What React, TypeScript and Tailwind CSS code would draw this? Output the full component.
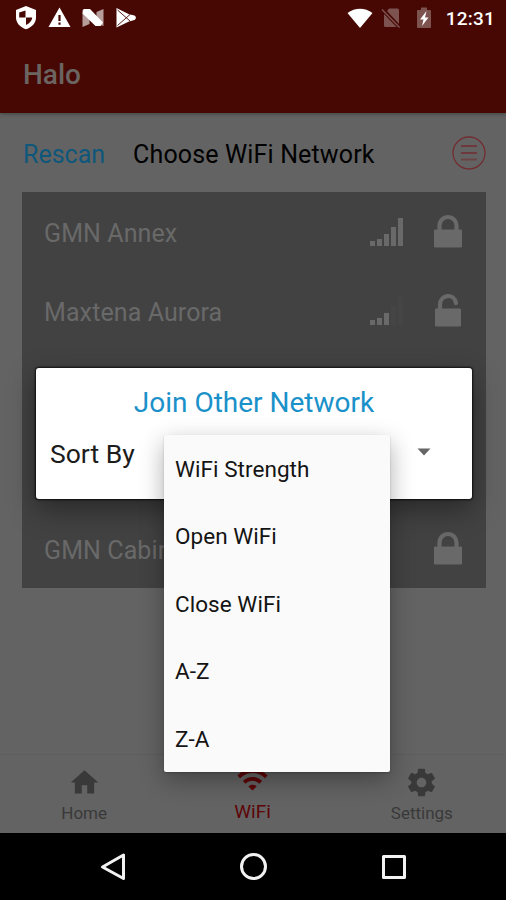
import React from 'react';

const networks = [
  { name: 'GMN Annex', level: 5, locked: true },
  { name: 'Maxtena Aurora', level: 3, locked: false },
  { name: '', level: 0, locked: true },
  { name: '', level: 0, locked: true },
  { name: 'GMN Cabinet', level: 0, locked: true },
];

const sortOptions = ['WiFi Strength', 'Open WiFi', 'Close WiFi', 'A-Z', 'Z-A'];

const StatusBar: React.FC = () => (
  <div className="flex h-9 items-center justify-between pl-[15px] pr-[11px]">
    <div className="flex items-center gap-[11px]">
      <svg width="22" height="24" viewBox="0 0 22 24">
        <path d="M11 0 21 4v7.500c0 5.400-4 9.800-10 11.800C5 21.300 1 16.900 1 11.500V4z" fill="#fff" />
        <path d="M10.500 4.500v7H4.200v-5zM11 11.500h6.300c-.5 3.500-3 6-6.300 7.500z" fill="#470804" />
      </svg>
      <svg width="23" height="24" viewBox="0 0 23 24">
        <path d="M11.500 1.500 22.500 21H.5z" fill="#fff" />
        <path d="M10.400 9h2.200v6h-2.200zM10.400 16.500h2.200v2.200h-2.200z" fill="#470804" />
      </svg>
      <svg width="22" height="24" viewBox="0 0 22 24">
        <path d="M.5 4v17l7-3V4zM14.500 6v12l7 2V3z" fill="#b69c9a" />
        <path d="M1.500 3h6.500l13 13.500-2.500 3.500h-5L.5 7.500z" fill="#fff" />
      </svg>
      <svg width="22" height="24" viewBox="0 0 22 24">
        <path d="M1.500 2 14 8.300l5.500 1.200a2.500 2.500 0 0 1 0 4.500L14 15.500 1.500 21.500z" fill="#fff" />
        <path d="m2.500 4 12.500 11M2.500 19.500 15 8.500" stroke="#470804" strokeWidth=".9" />
      </svg>
    </div>
    <div className="flex items-center">
      <svg width="26" height="22" viewBox="0 0 26 22">
        <path d="M.5 6C8 .2 18 .2 25.500 6L13 21z" fill="#fff" />
      </svg>
      <svg className="ml-[7px]" width="22" height="24" viewBox="0 0 22 24">
        <path d="M9 2.500h8.500q1.500 0 1.500 1.500v14L7 5zM4 8l12.500 13H5.500Q4 21 4 19.500z" fill="#7d5350" />
        <path d="m2 3.500 17.500 18" stroke="#7d5350" strokeWidth="1.500" />
      </svg>
      <svg className="ml-[14px]" width="16" height="24" viewBox="0 0 16 24">
        <path d="M5 1.500h6V4h3q1 0 1 1v16q0 1-1 1H2q-1 0-1-1V5q0-1 1-1h3z" fill="#7d5350" />
        <path d="M10.500 5 4 13.500h3.500L6 20l6.500-8.500H9z" fill="#fff" />
      </svg>
      <span className="ml-[14px] text-[19px] font-medium leading-none tracking-[0.2px] text-white">12:31</span>
    </div>
  </div>
);

const SignalIcon: React.FC<{ level: number }> = ({ level }) => (
  <svg width="34" height="30" viewBox="0 0 34 30">
    {[5, 7, 12, 19, 28].map((h, i) => (
      <rect key={h} x={i * 7} y={29 - h} width="5" height={h} fill={i < level ? '#696969' : '#454545'} />
    ))}
  </svg>
);

const LockIcon: React.FC<{ locked: boolean }> = ({ locked }) => (
  <svg className="mb-0.5" width="28" height="34" viewBox="0 0 28 34">
    <path
      d={locked ? 'M5.500 17v-5.500a8.500 8.500 0 0 1 17 0V17' : 'M6 17v-5.500c0-10 14-12 16-1.500'}
      fill="none"
      stroke="#696969"
      strokeWidth="4.200"
      strokeLinecap={locked ? 'butt' : 'round'}
    />
    <rect x={locked ? 0 : 1} y="15.500" width={locked ? 28 : 26} height="18" rx="1" fill="#696969" />
  </svg>
);

const NetworkList: React.FC = () => (
  <ul className="ml-[22px] mr-5 h-[396px] bg-[#424242] pr-6 pl-[22px] text-[25px] text-[#696969]">
    {networks.map((network, i) => (
      <li key={i} className="flex h-[79.300px] items-center">
        <span className="flex-1 pt-1 tracking-[0.1px]">{network.name}</span>
        {network.level > 0 && <SignalIcon level={network.level} />}
        <span className="ml-[30px]">
          <LockIcon locked={network.locked} />
        </span>
      </li>
    ))}
  </ul>
);

const TabBar: React.FC = () => (
  <div className="flex h-[79px] border-t border-[#5e5e5e] text-[17px] text-[#393939]">
    <div className="flex flex-1 flex-col items-center pt-[11px]">
      <svg width="33" height="33" viewBox="0 0 24 24" fill="currentColor">
        <path d="M10 20v-6h4v6h5v-8h3L12 3 2 12h3v8z" />
      </svg>
      <span className="leading-[29px]">Home</span>
    </div>
    <div className="flex flex-1 flex-col items-center pt-[8px] text-[#5d0508]">
      <svg width="33" height="33" viewBox="0 0 24 24" fill="currentColor">
        <path d="M1 9l2 2c4.970-4.970 13.030-4.970 18 0l2-2C16.930 2.930 7.080 2.930 1 9zm8 8l3 3 3-3c-1.650-1.660-4.340-1.660-6 0zm-4-4l2 2c2.760-2.760 7.240-2.760 10 0l2-2C15.140 9.140 8.870 9.140 5 13z" />
      </svg>
      <span className="text-[19px] leading-[32px]">WiFi</span>
    </div>
    <div className="flex flex-1 flex-col items-center pl-px pt-[11px]">
      <svg width="33" height="33" viewBox="0 0 24 24" fill="currentColor">
        <path d="M19.430 12.980c.04-.32.07-.64.07-.98s-.03-.66-.07-.98l2.110-1.650c.19-.15.24-.42.12-.64l-2-3.460c-.12-.22-.39-.3-.61-.22l-2.490 1c-.52-.4-1.080-.73-1.690-.98l-.38-2.650C14.460 2.180 14.250 2 14 2h-4c-.25 0-.46.18-.49.42l-.38 2.650c-.61.25-1.170.59-1.690.98l-2.490-1c-.23-.09-.49 0-.61.22l-2 3.460c-.13.22-.07.49.12.64l2.110 1.650c-.04.32-.07.65-.07.98s.03.66.07.98l-2.110 1.650c-.19.15-.24.42-.12.64l2 3.460c.12.22.39.3.61.22l2.490-1c.52.4 1.080.73 1.690.98l.38 2.650c.03.24.24.42.49.42h4c.25 0 .46-.18.49-.42l.38-2.650c.61-.25 1.170-.59 1.690-.98l2.490 1c.23.09.49 0 .61-.22l2-3.460c.12-.22.07-.49-.12-.64l-2.110-1.650zM12 15.500c-1.930 0-3.500-1.570-3.500-3.500s1.570-3.500 3.500-3.500 3.500 1.570 3.500 3.500-1.570 3.500-3.500 3.500z" />
      </svg>
      <span className="leading-[29px]">Settings</span>
    </div>
  </div>
);

const SystemNav: React.FC = () => (
  <div className="flex h-[67px] items-center justify-center gap-[112px] bg-black pl-px">
    <svg width="28" height="30" viewBox="0 0 28 30" fill="none" stroke="#f2f2f2" strokeWidth="3" strokeLinejoin="round">
      <path d="M23.500 3v23.500L2.500 15z" />
    </svg>
    <svg width="28" height="28" viewBox="0 0 28 28" fill="none" stroke="#f2f2f2" strokeWidth="3">
      <circle cx="13.500" cy="13.500" r="12" />
    </svg>
    <svg width="28" height="28" viewBox="0 0 28 28" fill="none" stroke="#f2f2f2" strokeWidth="3" strokeLinejoin="round">
      <rect x="3.500" y="3.500" width="21" height="21" />
    </svg>
  </div>
);

const JoinDialog: React.FC = () => (
  <div className="absolute left-[36px] top-[368px] h-[131px] w-[436px] rounded-[3px] bg-white shadow-[0_0_2px_1px_rgba(0,0,0,0.75),0_10px_28px_rgba(0,0,0,0.4)]">
    <h2 className="pt-[17px] text-center text-[28px] leading-[36px] text-[#1a91c9]">Join Other Network</h2>
    <div className="flex items-center justify-between pl-[14px] pr-[41px] pt-[15px]">
      <span className="text-[26.500px] leading-[36px] text-[#1c1c1c]">Sort By</span>
      <svg className="-mt-1" width="14" height="8" viewBox="0 0 14 8">
        <path d="M.5.5h13L7 7.500z" fill="#666" />
      </svg>
    </div>
  </div>
);

const SortMenu: React.FC = () => (
  <ul className="absolute left-[164px] top-[435px] h-[337px] w-[226px] rounded-[2px] bg-[#fafafa] text-[22.500px] text-[#141414] shadow-[0_1px_2px_rgba(0,0,0,0.2),0_8px_24px_rgba(0,0,0,0.32)]">
    {sortOptions.map((option) => (
      <li key={option} className="flex h-[67.500px] items-center pl-[11px] pt-0.5 tracking-[0.05px]">
        {option}
      </li>
    ))}
  </ul>
);

const App: React.FC = () => {
  return (
    <div className="relative flex h-[900px] w-[506px] flex-col overflow-hidden bg-[#636363] font-['Roboto',sans-serif]">
      <header className="h-[113px] bg-[#470804] shadow-[0_1px_4px_rgba(0,0,0,0.35)]">
        <StatusBar />
        <h1 className="pl-[23px] pt-[20px] text-[28px] font-medium leading-[38px] text-[#6b6562]">Halo</h1>
      </header>

      <div className="flex h-[79px] items-center pl-[23px] pr-5 text-[25px]">
        <span className="pt-1 text-[#0e577b]">Rescan</span>
        <span className="ml-7 flex-1 pt-1 tracking-[0.15px] text-black">Choose WiFi Network</span>
        <svg width="34" height="34" viewBox="0 0 34 34" fill="none" stroke="#722d32">
          <circle cx="17" cy="17" r="16" strokeWidth="1.300" />
          <path d="M9 10h16M9 17h16" strokeWidth="1.500" />
          <path d="M9 23.500h16" strokeWidth="2" strokeOpacity=".6" />
        </svg>
      </div>

      <main className="flex-1">
        <NetworkList />
      </main>

      <TabBar />
      <SystemNav />

      <JoinDialog />
      <SortMenu />
    </div>
  );
};

export default App;
